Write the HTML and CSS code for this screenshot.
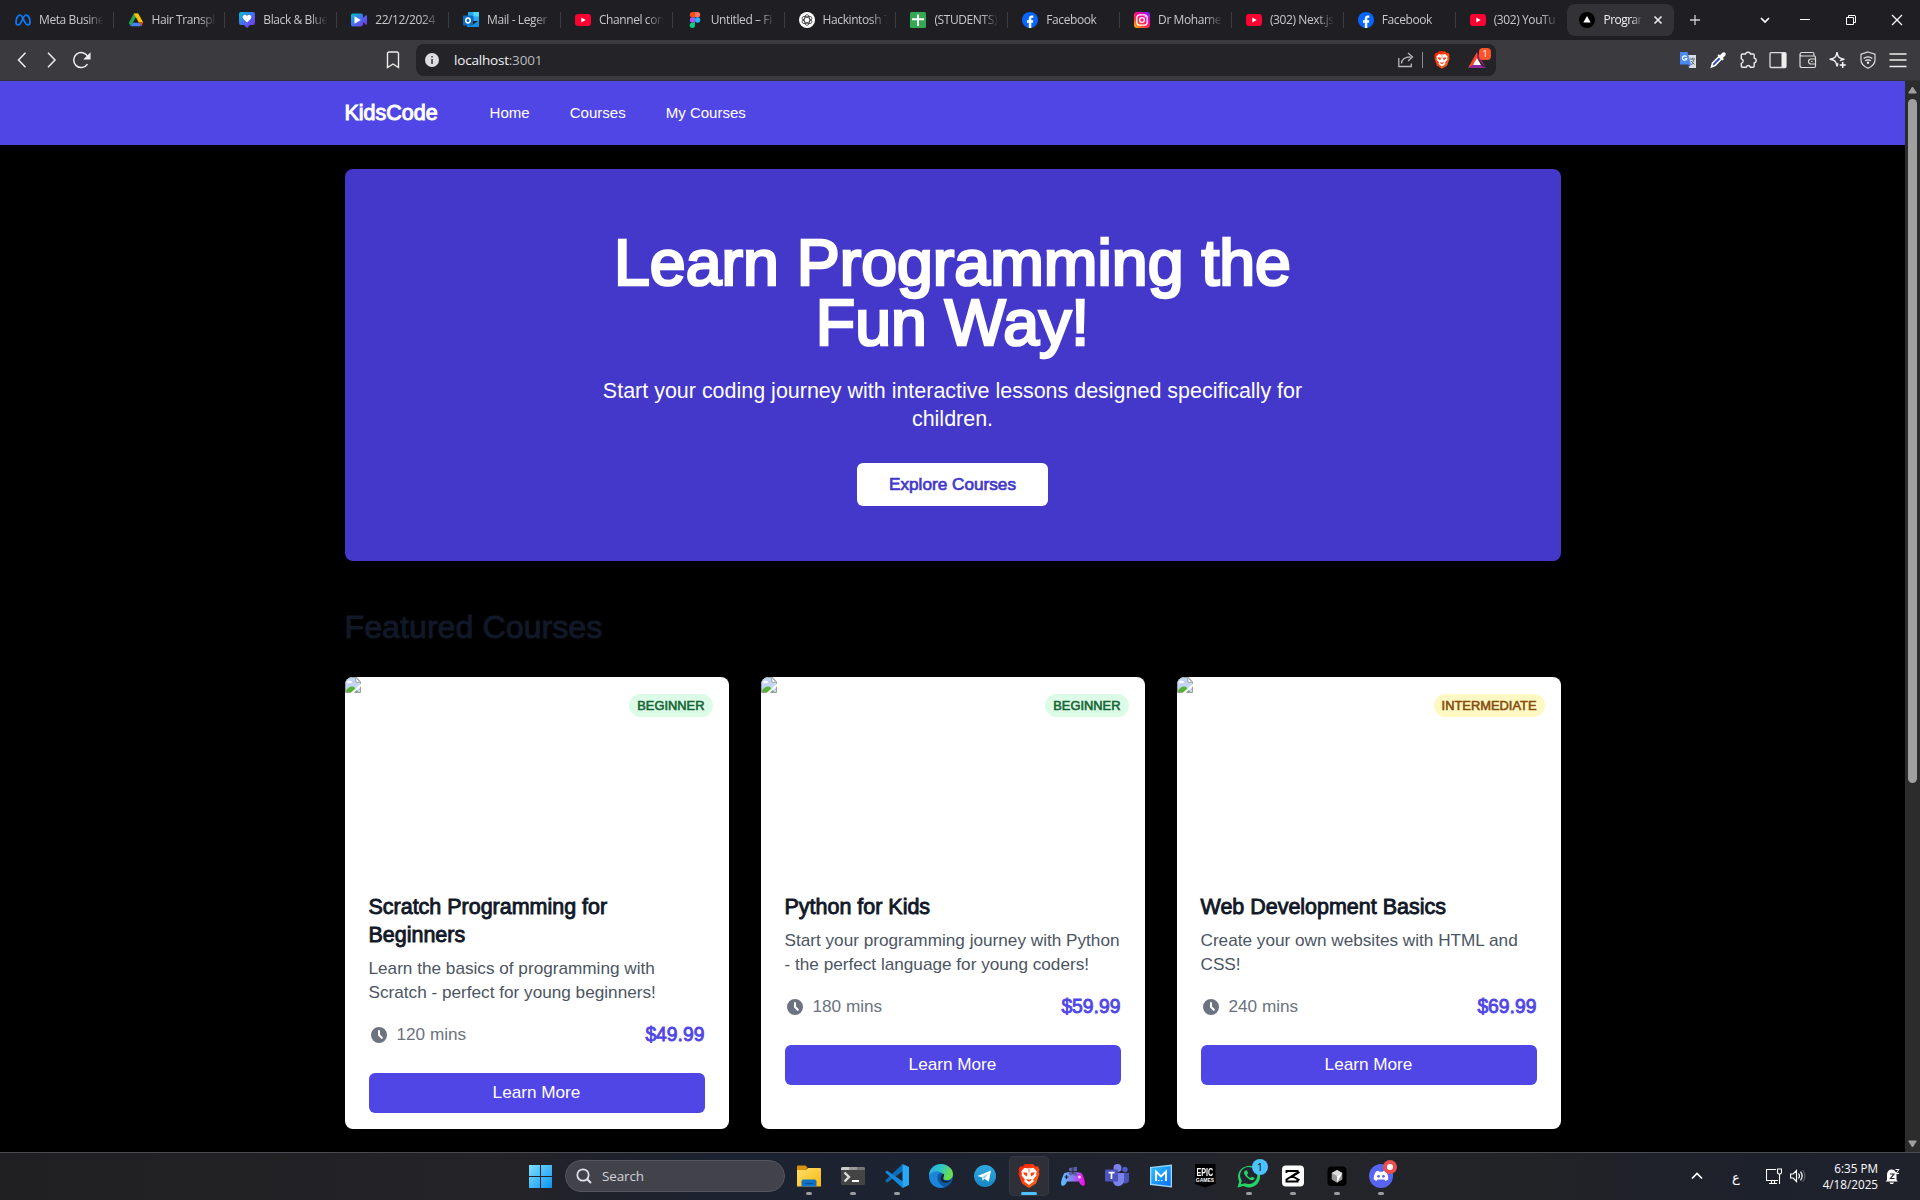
FILE: index.html
```html
<!DOCTYPE html>
<html lang="en">
<head>
<meta charset="utf-8">
<title>Programming for Kids</title>
<link rel="stylesheet" href="styles.css">
</head>
<body>
<svg class="sprite" width="0" height="0" aria-hidden="true">
  <defs>
    <linearGradient id="gCanva" x1="0" y1="0" x2="1" y2="1"><stop offset="0" stop-color="#00c4cc"/><stop offset=".5" stop-color="#4a6cf0"/><stop offset="1" stop-color="#7d2ae8"/></linearGradient>
    <linearGradient id="gInsta" x1="0" y1="1" x2=".8" y2="0"><stop offset="0" stop-color="#ffc800"/><stop offset=".4" stop-color="#ff3040"/><stop offset=".7" stop-color="#ff00a8"/><stop offset="1" stop-color="#8a20ff"/></linearGradient>
    <linearGradient id="gWin" x1="0" y1="0" x2="1" y2="1"><stop offset="0" stop-color="#7fe0ff"/><stop offset="1" stop-color="#0a93f5"/></linearGradient>
    <linearGradient id="gFolder" x1="0" y1="0" x2="1" y2="1"><stop offset="0" stop-color="#ffdf6b"/><stop offset="1" stop-color="#fbb80d"/></linearGradient>
    <linearGradient id="gBrave" x1="0" y1="0" x2="1" y2="1"><stop offset="0" stop-color="#ff1a00"/><stop offset="1" stop-color="#ff6a1a"/></linearGradient>
    <linearGradient id="gEdge" x1="0" y1="0" x2="1" y2=".4"><stop offset="0" stop-color="#2aa5e8"/><stop offset=".5" stop-color="#2fc6c8"/><stop offset="1" stop-color="#6be04a"/></linearGradient>
    <linearGradient id="gTele" x1="0" y1="0" x2="0" y2="1"><stop offset="0" stop-color="#2fa9e3"/><stop offset="1" stop-color="#1787c2"/></linearGradient>
    <linearGradient id="gPad" x1="0" y1="0" x2="1" y2="0"><stop offset="0" stop-color="#58c4ff"/><stop offset=".5" stop-color="#8a7cf0"/><stop offset="1" stop-color="#ff00e6"/></linearGradient>
    <linearGradient id="gM" x1="0" y1="0" x2="1" y2="1"><stop offset="0" stop-color="#2ec4ff"/><stop offset="1" stop-color="#0a6cff"/></linearGradient>
    <symbol id="meta" viewBox="0 0 16 16"><path d="M1 10.500C1 6.500 2.800 3 5 3c3 0 4.500 10 7.800 10 1.300 0 2.200-1 2.200-3 0-4-1.800-7-4-7C8 3 6.500 13 3.200 13 1.800 13 1 12 1 10.500z" fill="none" stroke="#0a7cff" stroke-width="1.700"/></symbol>
    <symbol id="drive" viewBox="0 0 16 16"><path d="M5.800 1.500h4.400L5 10.500 2.700 14.200 .8 11z" fill="#20a853"/><path d="M5.800 1.500h4.400L15.300 10.500h-5z" fill="#ffc107"/><path d="M4.800 10.500h6.500L13.300 14.200H2.700z" fill="#4285f4"/><path d="M8 5.500 5.200 10.500h5.600z" fill="#1f1f23"/><path d="M11 10.500h4.300L13.300 14.200z" fill="#ea4335"/></symbol>
    <symbol id="canva" viewBox="0 0 16 16"><path d="M2 0h12a2 2 0 0 1 2 2v9a2 2 0 0 1-2 2h-3l-3 3-3-3H2a2 2 0 0 1-2-2V2a2 2 0 0 1 2-2z" fill="url(#gCanva)"/><path d="M8 10.500 4.200 6.700a2.300 2.300 0 0 1 3.300-3.200l.5.500.5-.5a2.300 2.300 0 0 1 3.300 3.200z" fill="#fff"/></symbol>
    <symbol id="video" viewBox="0 0 16 16"><path d="M2 1.500h8a2 2 0 0 1 2 2V6l2.800-2.800L16 3.500v9l-1.200.3L12 10v2.500a2 2 0 0 1-2 2H2a2 2 0 0 1-2-2v-9a2 2 0 0 1 2-2z" fill="url(#gCanva)"/><path d="M3.500 4.200 9.800 8l-6.300 3.800z" fill="#fff"/></symbol>
    <symbol id="outlook" viewBox="0 0 16 16"><path d="M5 0h11v9H5z" fill="#28a8ea"/><path d="M10.500 0H16v4.500h-5.500z" fill="#50d9ff"/><path d="M5 4.500h5.500V9H5z" fill="#0364b8"/><path d="M3 9l6.500 4L16 8v7H4z" fill="#1490df"/><rect y="3.500" width="10" height="10" rx="1" fill="#0a6cc4"/><ellipse cx="5" cy="8.500" rx="2.200" ry="2.400" fill="none" stroke="#fff" stroke-width="1.500"/></symbol>
    <symbol id="youtube" viewBox="0 0 16 16"><rect y="2" width="16" height="12" rx="3" fill="#ff0033"/><path d="M6.300 5.500 10.700 8l-4.400 2.500z" fill="#fff"/></symbol>
    <symbol id="figma" viewBox="0 0 16 16"><path d="M8 0H5.500a2.600 2.600 0 0 0 0 5.300H8z" fill="#f24e1e"/><path d="M8 0h2.500a2.600 2.600 0 0 1 0 5.300H8z" fill="#ff7262"/><path d="M8 5.300H5.500a2.600 2.600 0 0 0 0 5.300H8z" fill="#a259ff"/><circle cx="10.600" cy="8" r="2.650" fill="#1abcfe"/><path d="M8 10.600H5.500A2.650 2.650 0 1 0 8 13.300z" fill="#0acf83"/></symbol>
    <symbol id="openai" viewBox="0 0 16 16"><circle cx="8" cy="8" r="8" fill="#fff"/><g fill="none" stroke="#333" stroke-width=".8"><ellipse cx="8" cy="8" rx="2.700" ry="5.400"/><ellipse cx="8" cy="8" rx="2.700" ry="5.400" transform="rotate(60 8 8)"/><ellipse cx="8" cy="8" rx="2.700" ry="5.400" transform="rotate(120 8 8)"/></g></symbol>
    <symbol id="sheets" viewBox="0 0 16 16"><rect width="16" height="16" rx="1.500" fill="#34a853"/><path d="M7 2.500h2v3.800h5v2H9V14H7V8.300H2v-2h5z" fill="#fff"/></symbol>
    <symbol id="facebook" viewBox="0 0 16 16"><circle cx="8" cy="8" r="8" fill="#0866ff"/><path d="M6.800 16v-5.300H5V8.200h1.800V6.800c0-2.200 1.200-3.400 3-3.400.6 0 1.200.1 1.500.2v2.100h-1c-.8 0-1 .4-1 1.100v1.400h2l-.4 2.500H9.300V16z" fill="#fff"/></symbol>
    <symbol id="instagram" viewBox="0 0 16 16"><rect width="16" height="16" rx="3" fill="url(#gInsta)"/><rect x="2.800" y="2.800" width="10.400" height="10.400" rx="3" fill="none" stroke="#fff" stroke-width="1.300"/><circle cx="8" cy="8" r="2.400" fill="none" stroke="#fff" stroke-width="1.300"/><circle cx="11.200" cy="4.800" r=".7" fill="#fff"/></symbol>
    <symbol id="vercel" viewBox="0 0 16 16"><circle cx="8" cy="8" r="8" fill="#000"/><path d="M8 4l3.700 6.500H4.300z" fill="#fff"/></symbol>
    <symbol id="brave" viewBox="0 0 22 24"><path d="M7 0h8l2.500 2.500L20 2.300l1.500 3.500-.7 2L21.500 10 18 19.500 11 24l-7-4.500L.5 10l.7-2.200-.7-2L2 2.300l2.500.2z" fill="url(#gBrave)"/><path d="M6.500 3.800l2 .5h5l2-.5L18.800 7.500 18 10l.5 1.500-3.300 3.700.5 2.300L11 21l-4.700-3.500.5-2.300-3.300-3.700L4 10l-.8-2.500z" fill="#fff"/><path d="M5.300 8.200l3.700.5.600 1.100-.9 2.600L6 10.500zM16.700 8.200l-3.700.5-.6 1.100.9 2.600L16 10.500zM8 14.700l3 1.100 3-1.100-1.300 2.100L11 17.800l-1.700-1z" fill="#ff4310"/><path d="M11 5v3.500" stroke="#ff4310" stroke-width=".8"/></symbol>
    <symbol id="broken" viewBox="0 0 16 16"><path d="M.5.500h10.700l4.300 4.300v10.700H.5z" fill="#c3d5f7" stroke="#a0a0a0"/><path d="M10.800.500v4.700h4.700z" fill="#fff" stroke="#a0a0a0"/><ellipse cx="4.500" cy="5" rx="2.500" ry="1.300" fill="#fff"/><path d="M1 15v-1.500Q7.500 5 13 15z" fill="#55b13a"/><path d="M16 6.500V9.500L8.500 16H5.500z" fill="#fff"/></symbol>
    <symbol id="clock" viewBox="0 0 20 20"><path fill="currentColor" fill-rule="evenodd" clip-rule="evenodd" d="M10 18a8 8 0 100-16 8 8 0 000 16zm1-12a1 1 0 10-2 0v4a1 1 0 00.293.707l2.828 2.829a1 1 0 101.415-1.415L11 9.586V6z"/></symbol>
  </defs>
</svg>

<div class="tabs">
  <div class="tab"><svg><use href="#meta"/></svg><span>Meta Busine</span></div>
  <div class="tab"><svg><use href="#drive"/></svg><span>Hair Transpl</span></div>
  <div class="tab"><svg><use href="#canva"/></svg><span>Black &amp; Blue</span></div>
  <div class="tab"><svg><use href="#video"/></svg><span>22/12/2024</span></div>
  <div class="tab"><svg><use href="#outlook"/></svg><span>Mail - Leger</span></div>
  <div class="tab"><svg><use href="#youtube"/></svg><span>Channel con</span></div>
  <div class="tab"><svg><use href="#figma"/></svg><span>Untitled – Fi</span></div>
  <div class="tab"><svg><use href="#openai"/></svg><span>Hackintosh T</span></div>
  <div class="tab"><svg><use href="#sheets"/></svg><span>(STUDENTS)</span></div>
  <div class="tab"><svg><use href="#facebook"/></svg><span>Facebook</span></div>
  <div class="tab"><svg><use href="#instagram"/></svg><span>Dr Mohame</span></div>
  <div class="tab"><svg><use href="#youtube"/></svg><span>(302) Next.js</span></div>
  <div class="tab"><svg><use href="#facebook"/></svg><span>Facebook</span></div>
  <div class="tab last"><svg><use href="#youtube"/></svg><span>(302) YouTu</span></div>
  <div class="tab active"><svg><use href="#vercel"/></svg><span>Progran</span>
    <svg class="x" viewBox="0 0 10 10"><path d="M1.500 1.500l7 7m0-7l-7 7" stroke="#e8e8ea" stroke-width="1.700"/></svg></div>
  <svg class="plus" viewBox="0 0 12 12"><path d="M6 1v10M1 6h10" stroke="#d0d0d2" stroke-width="1.300"/></svg>
  <div class="window">
    <svg viewBox="0 0 12 12"><path d="M2 4l4 4 4-4" fill="none" stroke="#fff" stroke-width="1.700"/></svg>
    <svg viewBox="0 0 12 12"><path d="M1 5.500h10" stroke="#fff"/></svg>
    <svg viewBox="0 0 12 12"><path d="M1.500 3.500h7v7h-7zM3.500 3V1.500h6.500l.5.500v6.500H9" fill="none" stroke="#fff"/></svg>
    <svg viewBox="0 0 12 12"><path d="M1 1l10 10M11 1L1 11" stroke="#fff" stroke-width="1.200"/></svg>
  </div>
</div>

<div class="toolbar">
  <div class="nav">
    <svg viewBox="0 0 20 20"><path d="M13.500 2.800 6.500 10l7 7.200"/></svg>
    <svg viewBox="0 0 20 20"><path d="M6 2.800l7 7.200-7 7.200"/></svg>
    <svg viewBox="0 0 20 20"><path d="M15.500 14.200A7.500 7.500 0 1 1 15.800 6.500"/><path d="M17.800 4v4.800h-4.800z" fill="#eee"/></svg>
  </div>
  <svg class="mark" viewBox="0 0 14 18"><path d="M1.500 2.500a1.500 1.500 0 0 1 1.500-1.500h8a1.500 1.500 0 0 1 1.500 1.500V16.500L7 13 1.500 16.500z" fill="none" stroke="#eee" stroke-width="1.400"/></svg>
  <div class="url">
    <svg class="info" viewBox="0 0 14 14"><circle cx="7" cy="7" r="7" fill="#dedee2"/><path d="M6.300 6h1.500v5H6.300zM6.300 3h1.500v1.600H6.300z" fill="#333"/></svg>
    <span class="addr">localhost<i>:3001</i></span>
    <svg class="share" viewBox="0 0 16 16"><path d="M.8 6v8.500h12.500V11.500M3.500 11.500c0-4 3-6.500 9-6.500M10 1l4.500 4L10 9" fill="none" stroke="#b8b8bb" stroke-width="1.300"/></svg>
    <b class="bar"></b>
    <svg class="shield"><use href="#brave"/></svg>
    <div class="bat"><svg viewBox="0 0 18 16"><path d="M9 0 0 16l9-5z" fill="#ff4724"/><path d="M0 16h18l-9-5z" fill="#8b2aa0"/><path d="M9 0v6l9 10z" fill="#9e1f63"/><path d="M9 6l4 7H5z" fill="#fff"/></svg><em>1</em></div>
  </div>
  <div class="ext">
    <svg viewBox="0 0 18 18"><path d="M8 4h9v13H10z" fill="#d8dce2"/><path d="M1 1h7.500l3.500 12.500H1z" fill="#4a8af4"/><path d="M8.500 13.500H12l-2.500 3z" fill="#2b59c3"/><path d="M7.500 5.800a2.200 2.200 0 1 0 .3 1.700H5.800" fill="none" stroke="#fff" stroke-width="1.200"/><path d="M11 8h5M13.500 6.800v1.500M12.500 14 15 8.500M12 10l3.500 3.500" stroke="#5f6b78" fill="none"/></svg>
    <svg viewBox="0 0 18 18"><path d="M3.500 12 10 5.500l2.500 2.500L6 14.500 2.500 16z" fill="#3d52a8" stroke="#fff" stroke-width="1.500"/><path d="M8.500 4.500l1.300-1.300 1.200 1L13 2c1-1 2.500-1.200 3.200-.3.900.8.600 2.200-.3 3.200l-2 2 1 1.200-1.300 1.300z" fill="#fff"/></svg>
    <svg viewBox="0 0 18 18"><path d="M3.500 3H6.500C7.200.6 11 .6 11.500 3h2.500a1.200 1.200 0 0 1 1.200 1.200V7C18 8 18 11.300 15.200 12v3a1.200 1.200 0 0 1-1.200 1.200h-2.700C10.500 14 8 14 7.300 16.200H3.500A1.200 1.200 0 0 1 2.300 15v-2.700C4.800 11.500 4.800 8.500 2.300 7.800V4.200A1.200 1.200 0 0 1 3.500 3z" fill="none" stroke="#eee" stroke-width="1.400" stroke-linejoin="round"/></svg>
    <svg viewBox="0 0 18 18"><rect x="1" y="1.700" width="16" height="14.800" rx="1" fill="none" stroke="#ddd" stroke-width="1.300"/><path d="M12.500 2H17v14.500h-4.500z" fill="#eee"/></svg>
    <svg viewBox="0 0 18 18"><path d="M15 5V3a1.500 1.500 0 0 0-1.500-1.500H3A2 2 0 0 0 1 3.300V14.500a2 2 0 0 0 2 2h12a1.500 1.500 0 0 0 1.500-1.500V6.500A1.500 1.500 0 0 0 15 5H3A2 2 0 0 1 1 3.300M16.500 8H12a2.500 2.500 0 0 0 0 5h4.500M12 10.500h1.500" fill="none" stroke="#ddd" stroke-width="1.200"/></svg>
    <svg viewBox="0 0 18 18"><path d="M8 1.200c.8 5 2 6.200 7 7-1.700.4-3 .8-4 1.500M8 15.500C7.200 10.300 6 9 1 8.200 6 7.400 7.200 6.200 8 1.200M8 15.500l.9-3.200" fill="none" stroke="#eee" stroke-width="1.400" stroke-linejoin="round"/><path d="M13.700 11v6M10.700 14h6" stroke="#fff" stroke-width="1.500"/></svg>
    <svg viewBox="0 0 18 18"><path d="M9 1l7 2.200V9c0 4-3 6.500-7 8.300C5 15.500 2 13 2 9V3.200z" fill="none" stroke="#ddd" stroke-width="1.200"/><path d="M4.700 7.500c2.700-2 5.900-2 8.600 0M6.200 9.700c1.800-1.200 3.800-1.200 5.600 0" fill="none" stroke="#eee" stroke-width="1.200"/><circle cx="9" cy="11.800" r="1.200" fill="#eee"/></svg>
    <svg viewBox="0 0 18 18"><path d="M.5 3h17M.5 9h17M.5 15.500h17" stroke="#eee" stroke-width="1.300"/></svg>
  </div>
</div>

<div class="view">
  <div class="page">
    <header class="site-header">
      <div class="container site-nav">
        <a class="logo">KidsCode</a>
        <nav><a>Home</a><a>Courses</a><a>My Courses</a></nav>
      </div>
    </header>
    <main class="container">
      <section class="hero">
        <h1>Learn Programming the Fun Way!</h1>
        <p>Start your coding journey with interactive lessons designed specifically for children.</p>
        <a class="cta">Explore Courses</a>
      </section>
      <h2>Featured Courses</h2>
      <div class="cards">
        <article class="card">
          <div class="thumb"><svg><use href="#broken"/></svg><span class="badge">BEGINNER</span></div>
          <div class="body">
            <h3>Scratch Programming for Beginners</h3>
            <p>Learn the basics of programming with Scratch - perfect for young beginners!</p>
            <div class="meta"><span class="time"><svg><use href="#clock"/></svg><span>120 mins</span></span><span class="price">$49.99</span></div>
            <a class="more">Learn More</a>
          </div>
        </article>
        <article class="card">
          <div class="thumb"><svg><use href="#broken"/></svg><span class="badge">BEGINNER</span></div>
          <div class="body">
            <h3>Python for Kids</h3>
            <p>Start your programming journey with Python - the perfect language for young coders!</p>
            <div class="meta"><span class="time"><svg><use href="#clock"/></svg><span>180 mins</span></span><span class="price">$59.99</span></div>
            <a class="more">Learn More</a>
          </div>
        </article>
        <article class="card">
          <div class="thumb"><svg><use href="#broken"/></svg><span class="badge mid">INTERMEDIATE</span></div>
          <div class="body">
            <h3>Web Development Basics</h3>
            <p>Create your own websites with HTML and CSS!</p>
            <div class="meta"><span class="time"><svg><use href="#clock"/></svg><span>240 mins</span></span><span class="price">$69.99</span></div>
            <a class="more">Learn More</a>
          </div>
        </article>
      </div>
    </main>
  </div>
  <div class="scroll">
    <svg viewBox="0 0 9 8"><path d="M4.500 1 8.300 7H.7z" fill="#a0a0a0" stroke="#a0a0a0" stroke-linejoin="round"/></svg>
    <div class="thumbbar"></div>
    <svg class="down" viewBox="0 0 9 8"><path d="M4.500 7 8.300 1H.7z" fill="#a0a0a0" stroke="#a0a0a0" stroke-linejoin="round"/></svg>
  </div>
</div>

<div class="taskbar">
  <div class="start"><svg viewBox="0 0 23 23"><path d="M0 0h11v11H0zM12 0h11v11H12zM0 12h11v11H0zM12 12h11v11H12z" fill="url(#gWin)"/></svg></div>
  <div class="search"><svg viewBox="0 0 16 16"><circle cx="7" cy="7" r="5.700" fill="none" stroke="#e4e4e8" stroke-width="1.700"/><path d="M11 11l4 4" stroke="#e4e4e8" stroke-width="1.900"/></svg>Search</div>
  <div class="apps">
    <div class="app run"><svg viewBox="0 0 24 24"><path d="M0 2.500A1 1 0 0 1 1 1.500h7.500l2 2L9 6H0z" fill="#d9930a"/><path d="M0 6h9l2-2h12a1 1 0 0 1 1 1v17.500H0z" fill="url(#gFolder)"/><path d="M4.500 22.500v-5a2 2 0 0 1 2-2h11a2 2 0 0 1 2 2v5z" fill="#0f74c8"/><path d="M7.500 19.500h9" stroke="#0a5096" stroke-width="1.200"/></svg></div>
    <div class="app run"><svg viewBox="0 0 24 24"><rect y="3" width="24" height="18" rx="1.500" fill="#444"/><path d="M0 6V4.500A1.500 1.500 0 0 1 1.500 3H8v3z" fill="#ccc"/><path d="M8 3h8v3H8z" fill="#999"/><path d="M16 3h6.500A1.500 1.500 0 0 1 24 4.500V6h-8z" fill="#777"/><path d="M3.500 8.500 8 13l-4.500 4.500" fill="none" stroke="#ddd" stroke-width="2.400"/><path d="M11 17h7" stroke="#fff" stroke-width="2"/></svg></div>
    <div class="app run"><svg viewBox="0 0 24 24"><path d="M18 7 2 18.800.2 16.500 17.500 0z" fill="#0a6fb8"/><path d="M2 6.500.2 8.300 17.500 24l.5-6.500z" fill="#1488d8"/><path d="M17.500 0 24 3v18l-6.500 3z" fill="#29a9f5"/></svg></div>
    <div class="app"><svg viewBox="0 0 24 24"><circle cx="12" cy="12" r="12" fill="#0c59a4"/><path d="M0 12C0 4 6 0 12 0s12 4.500 12 10c0 4-3 6-6 6-4 0-4-1.500-3.500-3C15 10.500 13 8 9.500 8S2 10 0 12z" fill="url(#gEdge)"/><path d="M0 12C2 7 10 6 12.500 9 9 9 8 12 8.500 15c.6 4 4 7 7.500 8C7 26 0 20 0 12z" fill="#1b86d9"/><path d="M14.500 13c-1.500 3 2 5.500 8.500 3-1 .5-4 3.500-8 2.500s-5-5-.5-9c1 1 .8 2 0 3.500z" fill="#202430"/></svg></div>
    <div class="app"><svg viewBox="0 0 24 24"><circle cx="12" cy="12" r="11" fill="url(#gTele)"/><path d="M4.500 12 18 6.500 15.800 17.800 11.500 14.700 9.500 16.700 9.200 13.500z" fill="#fff"/><path d="M9.200 13.500 15.500 9 11.500 14.700z" fill="#9ccdea"/></svg></div>
    <div class="app open"><svg><use href="#brave"/></svg></div>
    <div class="app"><svg viewBox="0 0 24 24"><path d="M3.500 9 8 8l1.500 2h5L16 8l4.500 1c2 3 3.500 8 3.500 11-1 3-4 2.500-6-2.500H6C4 22.500 1 23 0 20 0 17 1.500 12 3.500 9z" fill="url(#gPad)"/><path d="M8 4l3.500-.5V7H8zM12.300 3.300 16 2.800V7h-3.700zM8 7.800h3.500v3.500L8 11zM12.300 7.800H16v4l-3.700-.4z" fill="#5560a8"/><path d="M5.500 11v4M3.500 13h4" stroke="#202430" stroke-width="1.200"/><circle cx="18.500" cy="13" r="1.500" fill="#ffd0fa"/></svg></div>
    <div class="app"><svg viewBox="0 0 24 24"><circle cx="20" cy="5.500" r="2.700" fill="#5059c9"/><path d="M15 9h9v7c0 3-3 4-6 3z" fill="#4a52b8"/><circle cx="12.500" cy="4" r="4" fill="#7b83eb"/><path d="M8 9h11v7c0 8-11 8-11 1z" fill="#7b83eb"/><rect y="5.500" width="13" height="12" rx="1" fill="#4b53bc"/><path d="M3.500 8.700h6M6.500 8.700V15" stroke="#fff" stroke-width="1.700"/></svg></div>
    <div class="app"><svg viewBox="0 0 24 24"><path d="M1 3 23 .5v23L1 21z" fill="#9fd8f5"/><path d="M2.300 4 21.700 2v20L2.300 19.800z" fill="url(#gM)"/><path d="M7 17V7.500l5 5 5-5V17" fill="none" stroke="#fff" stroke-width="1.900"/><path d="M9 16.500h6" stroke="#fff" stroke-dasharray="1.500 1.500"/></svg></div>
    <div class="app"><div class="epic"><b>EPIC</b><i>GAMES</i></div></div>
    <div class="app run"><svg viewBox="0 0 24 24"><path d="M.5 23.500l1.700-6A11 10.800 0 1 1 6.500 22z" fill="#25d366"/><path d="M3.800 20.300l1-3.700A8.600 8.500 0 1 1 8 19.200z" fill="#202630"/><path d="M8.500 6.500c-2 1-2 3.500 1 6.500s6 4.500 7.700 2.300c.5-.8.3-1.300-.2-1.600l-2-1-1.600 1.400c-1.300-.5-2.800-2-3.400-3.300l1.200-1.500-.9-2.200c-.3-.8-1-1-1.800-.6z" fill="#25d366"/></svg><span class="dot">1</span></div>
    <div class="app run"><svg viewBox="0 0 24 24"><rect x="1" y="1.500" width="22" height="21" rx="4" fill="#fff"/><path d="M5.500 9V7h11v1.500l-11 7v2h11v-2M18.500 8l-7 4.200 7 4" fill="none" stroke="#000" stroke-width="1.900"/></svg></div>
    <div class="app run"><svg viewBox="0 0 24 24"><rect x="2.500" y="2.500" width="19" height="19.500" rx="4" fill="#000"/><path d="M12 6 17.300 9v6.500L12 18.700 6.700 15.500V9z" fill="#999"/><path d="M12 6 17.300 9 12 12 6.700 9z" fill="#ddd"/><path d="M17.300 9 12 18.700V12z" fill="#fff"/></svg></div>
    <div class="app run"><svg viewBox="0 0 24 24"><circle cx="12" cy="12" r="12" fill="#5865f2"/><path d="M7 7.500l2.500-.8.600 1h3.800l.6-1 2.500.8c1.500 2 2.500 5 2.200 8L16.500 17l-1-1.500h-7l-1 1.500-2.700-1.500c-.3-3 .7-6 2.200-8z" fill="#fff"/><circle cx="9.500" cy="12.300" r="1.400" fill="#5865f2"/><circle cx="14.500" cy="12.300" r="1.400" fill="#5865f2"/></svg><span class="dot rec"></span></div>
  </div>
  <div class="tray">
    <svg class="up" viewBox="0 0 12 8"><path d="M1 6.500 6 1.500l5 5" fill="none" stroke="#fff" stroke-width="1.700"/></svg>
    <span class="lang">ع</span>
    <svg class="net" viewBox="0 0 16 17"><path d="M10 1.500H.5v11h11.500M3 15.500h8M5.500 13v2M8.500 13v2M11.500 1h4v4l-2 1.500-2-1.500zM13.500 6.500V16" fill="none" stroke="#fff" stroke-width="1.100"/></svg>
    <svg class="vol" viewBox="0 0 16 14"><path d="M.6 5h2.500L6.500 1.500v11L3.100 9H.6zM8.500 4.500q2 2.500 0 5M10.500 2.700q3.300 4.300 0 8.600" fill="none" stroke="#fff" stroke-width="1.200"/><path d="M12.700 1q4.500 6 0 12" fill="none" stroke="#666b75"/></svg>
    <div class="when"><span>6:35 PM</span><span>4/18/2025</span></div>
    <svg class="bell" viewBox="0 0 15 17"><path d="M2 12V6.500C2 3.500 4 1.500 6.500 1.500S11 3.500 11.500 6v6l1.500 1.500H.5zM4.500 14.500h4.500l-1 1.500H5.500z" fill="#fff"/><path d="M5 6h4L5.500 10.500h4" fill="none" stroke="#222630" stroke-width="1.200"/><path d="M10.500 1.500H14L11 5.500h3" fill="none" stroke="#fff"/></svg>
  </div>
</div>
</body>
</html>
```
FILE: styles.css
```css
* { box-sizing: border-box; }
body {
  margin: 0;
  width: 1920px;
  height: 1200px;
  overflow: hidden;
  display: flex;
  flex-direction: column;
  background: #000;
  font-family: "Liberation Sans", Arial, sans-serif;
}
svg { display: block; flex: none; }
.sprite { position: absolute; }
h1, h2, h3, p { margin: 0; font-weight: 400; }

/* ---- browser tabs ---- */
.tabs {
  flex: none;
  height: 40px;
  display: flex;
  align-items: center;
  background: #1f1f23;
  font-family: "Open Sans", "Noto Sans", sans-serif;
  font-size: 12px;
  color: #c8c8cc;
}
.tab {
  width: 111.850px;
  height: 16px;
  flex: none;
  display: flex;
  align-items: center;
  padding-left: 14px;
}
.tab svg { width: 16px; height: 16px; }
.tab:first-child { width: 113.500px; padding-left: 15px; }
.tab:not(.active):not(.last) { border-right: 1px solid #3c3c41; }
.tab span {
  margin-left: 8px;
  width: 66px;
  white-space: nowrap;
  line-height: 16px;
  letter-spacing: -.4px;
  -webkit-mask-image: linear-gradient(90deg, #000 72%, transparent 98%);
  mask-image: linear-gradient(90deg, #000 72%, transparent 98%);
}
.tab.active {
  width: 107px;
  height: 32px;
  padding-left: 12px;
  border-radius: 8px;
  background: #323237;
  color: #f0f0f2;
}
.tab.active span { width: 40px; margin-left: 8px; letter-spacing: -.55px; }
.tab svg.x { width: 10px; height: 10px; margin-left: 10px; }
.plus { width: 12px; height: 12px; margin-left: 15px; }
.window { margin-left: auto; margin-right: 17px; display: flex; align-items: center; gap: 34px; }
.window svg { width: 12px; height: 12px; }
.window svg:first-child { margin-right: -6px; }

/* ---- browser toolbar ---- */
.toolbar {
  flex: none;
  height: 41px;
  display: flex;
  align-items: center;
  background: #3b3a3f;
  border-bottom: 1px solid #323236;
}
.nav { display: flex; gap: 10px; padding-left: 12px; }
.nav svg { width: 20px; height: 20px; fill: none; stroke: #eee; stroke-width: 1.500; }
.mark { width: 14px; height: 18px; margin-left: 294px; }
.url {
  width: 1080px;
  height: 32px;
  margin-left: 16px;
  border-radius: 8px;
  background: #242428;
  display: flex;
  align-items: center;
  padding-left: 9px;
}
.info { width: 14px; height: 14px; }
.addr { flex: 1; margin-left: 15px; font: 13.500px/20px "Open Sans", "Noto Sans", sans-serif; color: #f2f2f4; letter-spacing: -.2px; }
.addr i { font-style: normal; color: #b9b9be; }
.share { width: 16px; height: 16px; }
.bar { width: 1px; height: 16px; margin: 0 11px 0 8px; background: #8c8c90; }
.shield { width: 16px; height: 18px; }
.bat { position: relative; margin: 0 10px 0 18px; }
.bat svg { width: 18px; height: 16px; }
.bat em {
  position: absolute;
  left: 11px;
  top: -4px;
  width: 12px;
  height: 12px;
  border-radius: 4px;
  background: #fb542b;
  color: #fff;
  font: 9px/12px "Open Sans", sans-serif;
  text-align: center;
}
.ext { display: flex; gap: 12px; margin-left: auto; margin-right: 13px; }
.ext svg { width: 18px; height: 18px; }

/* ---- page ---- */
.view { flex: 1; min-height: 0; display: flex; }
.page { flex: 1; overflow: hidden; }
.container { width: 1216px; margin: 0 auto; }
.site-header { height: 64px; background: #4f46e5; color: #fff; }
.site-nav { height: 64px; display: flex; align-items: center; }
.logo { font-size: 21.480px; line-height: 28px; -webkit-text-stroke: 1px currentColor; }
.site-nav nav { display: flex; gap: 40px; margin-left: 52px; font-size: 15.040px; line-height: 20px; }

.hero {
  height: 392px;
  margin-top: 24px;
  padding-top: 64px;
  border-radius: 8px;
  background: #4338ca;
  color: #fff;
  display: flex;
  flex-direction: column;
  align-items: center;
  text-align: center;
}
.hero h1 { width: 768px; font-size: 64.440px; line-height: 60px; -webkit-text-stroke: 2.700px currentColor; }
.hero p { width: 768px; margin-top: 24px; font-size: 21.480px; line-height: 28px; }
.cta {
  margin-top: 30px;
  padding: 0 32px;
  border-radius: 6px;
  background: #fff;
  color: #4338ca;
  font-size: 17.180px;
  line-height: 43px;
  -webkit-text-stroke: .7px currentColor;
}
h2 { margin: 48px 0 32px; font-size: 32.220px; line-height: 36px; color: #111827; -webkit-text-stroke: 1px currentColor; }

.cards { display: grid; grid-template-columns: repeat(3, 1fr); gap: 32px; }
.card { height: 452px; border-radius: 8px; background: #fff; overflow: hidden; }
.thumb { height: 192px; position: relative; }
.thumb svg { width: 16px; height: 16px; }
.badge {
  position: absolute;
  top: 17px;
  right: 16px;
  padding: 0 8px;
  border-radius: 12px;
  background: #dcfce7;
  color: #166534;
  font-size: 12.890px;
  line-height: 23px;
  -webkit-text-stroke: .6px currentColor;
}
.badge.mid { background: #fef9c3; color: #854d0e; }
.body { padding: 24px 24px 16px; }
.body h3 { font-size: 21.480px; line-height: 28px; color: #111827; -webkit-text-stroke: .9px currentColor; }
.body p { margin-top: 7px; font-size: 17.180px; line-height: 24px; color: #4b5563; }
.meta { margin-top: 17px; height: 28px; display: flex; align-items: center; justify-content: space-between; }
.time { display: flex; align-items: center; gap: 8px; font-size: 17.180px; line-height: 24px; color: #6b7280; }
.time svg { width: 20px; height: 20px; }
.time span { padding-bottom: 2px; }
.price { font-size: 19.330px; line-height: 28px; color: #4f46e5; -webkit-text-stroke: .85px currentColor; }
.more {
  display: block;
  margin-top: 24px;
  padding-bottom: 2px;
  border-radius: 6px;
  background: #4f46e5;
  color: #fff;
  font-size: 17.180px;
  line-height: 38px;
  text-align: center;
}

.scroll { width: 15px; background: #2c2c2c; display: flex; flex-direction: column; align-items: center; padding: 5px 0 4px; }
.scroll svg { width: 9px; height: 8px; }
.thumbbar { width: 9px; height: 684px; margin-top: 5px; border-radius: 5px; background: #9f9f9f; }
.scroll .down { margin-top: auto; }

/* ---- taskbar ---- */
.taskbar {
  flex: none;
  height: 48px;
  display: flex;
  align-items: center;
  padding: 0 0 1px 529px;
  border-top: 1px solid #4a4b50;
  background: linear-gradient(90deg, #202022 0%, #242327 26%, #1b2230 38%, #1e2330 52%, #24252a 66%, #222327 80%, #1d212c 92%, #1f222b 100%);
  font-family: "Open Sans", "Noto Sans", sans-serif;
  color: #fff;
}
.start svg { width: 23px; height: 23px; }
.search {
  width: 220px;
  height: 32px;
  margin-left: 13px;
  padding: 0 0 1px 10px;
  display: flex;
  align-items: center;
  gap: 10px;
  border: 1px solid #55565e;
  border-radius: 16px;
  background: #41424a;
  font-size: 13.500px;
  letter-spacing: -.15px;
  color: #d2d2d6;
}
.search svg { width: 16px; height: 16px; }
.apps { display: flex; margin-left: 2px; }
.app { width: 44px; height: 40px; display: flex; align-items: center; justify-content: center; position: relative; padding-bottom: 1px; }
.app > svg { width: 24px; height: 24px; }
.app.run::after, .app.open::after {
  content: "";
  position: absolute;
  bottom: 1px;
  left: 19px;
  width: 6px;
  height: 3px;
  border-radius: 2px;
  background: #9b9ca1;
}
.app.open { width: 40px; margin: 0 2px; border-radius: 5px; background: #2d3039; box-shadow: inset 0 0 0 1px #363942; }
.app.open::after { left: 12px; width: 16px; background: #4cc2ff; }
.epic {
  width: 21px;
  height: 24px;
  background: #000;
  clip-path: polygon(0 0, 100% 0, 100% 84%, 50% 100%, 0 84%);
  display: flex;
  flex-direction: column;
  align-items: center;
  padding-top: 2px;
}
.epic b { font: 700 11px/12px "Liberation Sans", sans-serif; transform: scaleX(.65); }
.epic i { font: 700 5px/5px "Liberation Sans", sans-serif; }
.dot {
  position: absolute;
  left: 25px;
  top: 3px;
  width: 16px;
  height: 16px;
  border-radius: 50%;
  background: #4cc2ff;
  color: #111;
  font-size: 11px;
  line-height: 16px;
  text-align: center;
}
.dot.rec { left: 24px; top: 4px; width: 14px; height: 14px; background: #fff; border: 4px solid #e8504f; }
.tray { margin-left: auto; height: 46px; display: flex; align-items: center; padding-right: 20px; }
.up { width: 12px; height: 8px; }
.lang { margin: 3px 0 0 29px; font: 13px/16px "DejaVu Sans", sans-serif; width: 9px; }
.net { width: 16px; height: 17px; margin-left: 25px; }
.vol { width: 16px; height: 14px; margin-left: 8px; }
.when { width: 72px; display: flex; flex-direction: column; text-align: right; font-size: 11.700px; line-height: 16px; padding-bottom: 1px; }
.bell { width: 15px; height: 17px; margin-left: 7px; }
```
